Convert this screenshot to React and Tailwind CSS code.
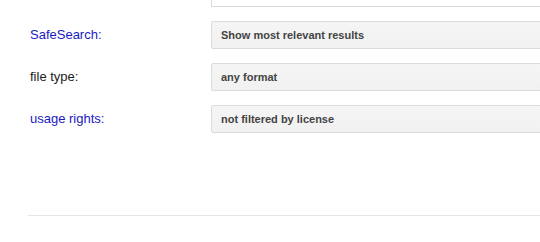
export default function App() {
  const rows = [
    { label: "SafeSearch:", link: true, value: "Show most relevant results" },
    { label: "file type:", link: false, value: "any format" },
    { label: "usage rights:", link: true, value: "not filtered by license" },
  ];
  return (
    <div
      className="w-[540px] h-[242px] overflow-hidden bg-white"
      style={{ fontFamily: '"Liberation Sans", Arial, sans-serif' }}
    >
      <div className="mt-[-21px] flex w-[600px] flex-col gap-[14px] pl-[30px]">
        <div className="flex items-center">
          <div className="w-[181px] shrink-0" />
          <div className="h-[28px] flex-1 border border-[#d9d9d9] border-t-[#c0c0c0] bg-white" />
        </div>
        {rows.map((r) => (
          <div key={r.label} className="flex items-center">
            <div
              className={`w-[181px] shrink-0 text-[13px] ${
                r.link ? "text-[#1a1ac0]" : "text-[#222]"
              }`}
            >
              {r.label}
            </div>
            <div className="flex h-[28px] flex-1 items-center rounded-l-[2px] border border-[#dcdcdc] bg-gradient-to-b from-[#f5f5f5] to-[#f1f1f1] pl-[9px] text-[11px] font-bold text-[#444]">
              {r.value}
            </div>
          </div>
        ))}
      </div>
      <div className="ml-[28px] mt-[82px] h-px bg-[#e5e5e5]" />
    </div>
  );
}
